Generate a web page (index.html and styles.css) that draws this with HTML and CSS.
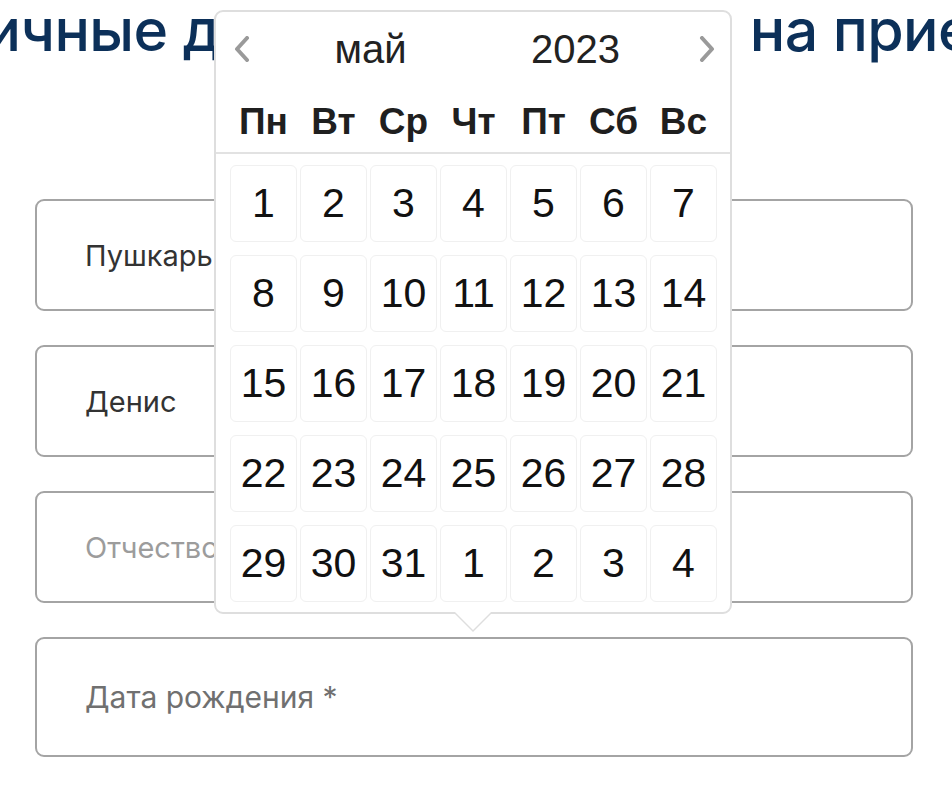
FILE: index.html
```html
<!DOCTYPE html>
<html lang="ru">

<head>
  <meta charset="UTF-8">
  <meta name="viewport" content="width=device-width, initial-scale=1.0">
  <title>Запись на приём</title>
  <link rel="stylesheet" href="styles.css">
</head>

<body>

  <div class="page">
    <h1 class="page__title">Личные данные для записи на прием</h1>

    <form class="form">
      <div class="field">
        <input class="field__input" type="text" value="Пушкарь">
      </div>

      <div class="field">
        <input class="field__input" type="text" value="Денис">
      </div>

      <div class="field">
        <input class="field__input" type="text" placeholder="Отчество">
      </div>

      <div class="field field_date">
        <input class="field__input field__input_date" type="text" placeholder="Дата рождения *">

        <div class="datepicker">
          <div class="datepicker__head">
            <button class="datepicker__nav" type="button" aria-label="Предыдущий месяц">
              <svg width="16" height="26" viewBox="0 0 16 26"><path d="M13 2 L3 13 L13 24" fill="none" stroke="#9a9a9a" stroke-width="4" stroke-linecap="round" stroke-linejoin="round"/></svg>
            </button>
            <span class="datepicker__title">май</span>
            <span class="datepicker__title">2023</span>
            <button class="datepicker__nav datepicker__nav_next" type="button" aria-label="Следующий месяц">
              <svg width="16" height="26" viewBox="0 0 16 26"><path d="M3 2 L13 13 L3 24" fill="none" stroke="#9a9a9a" stroke-width="4" stroke-linecap="round" stroke-linejoin="round"/></svg>
            </button>
          </div>

          <div class="datepicker__weekdays">
            <span>Пн</span><span>Вт</span><span>Ср</span><span>Чт</span><span>Пт</span><span>Сб</span><span>Вс</span>
          </div>

          <div class="datepicker__days">
            <button class="day" type="button">1</button>
            <button class="day" type="button">2</button>
            <button class="day" type="button">3</button>
            <button class="day" type="button">4</button>
            <button class="day" type="button">5</button>
            <button class="day" type="button">6</button>
            <button class="day" type="button">7</button>
            <button class="day" type="button">8</button>
            <button class="day" type="button">9</button>
            <button class="day" type="button">10</button>
            <button class="day" type="button">11</button>
            <button class="day" type="button">12</button>
            <button class="day" type="button">13</button>
            <button class="day" type="button">14</button>
            <button class="day" type="button">15</button>
            <button class="day" type="button">16</button>
            <button class="day" type="button">17</button>
            <button class="day" type="button">18</button>
            <button class="day" type="button">19</button>
            <button class="day" type="button">20</button>
            <button class="day" type="button">21</button>
            <button class="day" type="button">22</button>
            <button class="day" type="button">23</button>
            <button class="day" type="button">24</button>
            <button class="day" type="button">25</button>
            <button class="day" type="button">26</button>
            <button class="day" type="button">27</button>
            <button class="day" type="button">28</button>
            <button class="day" type="button">29</button>
            <button class="day" type="button">30</button>
            <button class="day" type="button">31</button>
            <button class="day day_next-month" type="button">1</button>
            <button class="day day_next-month" type="button">2</button>
            <button class="day day_next-month" type="button">3</button>
            <button class="day day_next-month" type="button">4</button>
          </div>
        </div>
      </div>
    </form>
  </div>

</body>

</html>
```

FILE: styles.css
```css
body {
  margin: 0;
  background-color: #fff;
  font-family: Inter, "Noto Sans", sans-serif;
}

.page {
  overflow: hidden;
  min-height: 786px;
}

.page__title {
  margin: 0 0 0 -58px;
  font-size: 59px;
  line-height: 60px;
  font-weight: 500;
  letter-spacing: -0.6px;
  color: #0c3059;
  white-space: nowrap;
}

.form {
  display: flex;
  flex-direction: column;
  gap: 34px;
  width: 878px;
  margin: 139px 0 0 35px;
}

.field {
  position: relative;
}

.field__input {
  display: block;
  box-sizing: border-box;
  width: 100%;
  height: 112px;
  padding: 0 20px 0 48px;
  border: 2px solid #a4a4a4;
  border-radius: 9px;
  font-family: inherit;
  font-size: 29px;
  color: #333;
  background: #fff;
  outline: none;
}

.field__input::placeholder {
  color: #9c9c9c;
}

.field__input_date {
  height: 120px;
  font-size: 30px;
}

.field__input_date::placeholder {
  color: #707070;
}

/* календарь над полем даты */
.datepicker {
  position: absolute;
  left: 179px;
  bottom: calc(100% + 23px);
  z-index: 2;
  box-sizing: border-box;
  width: 518px;
  padding: 0 13px 10px 14px;
  border: 2px solid #dedede;
  border-radius: 9px;
  background-color: #fff;
  font-family: "Liberation Sans", Arial, sans-serif;
  color: #222;
}

.datepicker::before,
.datepicker::after {
  content: "";
  position: absolute;
  left: 50%;
  width: 0;
  height: 0;
  border-style: solid;
  border-color: transparent;
}

.datepicker::before {
  top: calc(100% + 2px);
  margin-left: -18px;
  border-width: 18px 18px 0;
  border-top-color: #dedede;
}

.datepicker::after {
  top: 100%;
  margin-left: -18px;
  border-width: 18px 18px 0;
  border-top-color: #fff;
}

.datepicker__head {
  display: flex;
  align-items: center;
  height: 74px;
  margin: 0 -13px 0 -14px;
}

.datepicker__nav {
  display: flex;
  align-items: center;
  justify-content: center;
  width: 52px;
  height: 100%;
  padding: 0;
  border: 0;
  background: none;
  cursor: pointer;
}

.datepicker__nav_next {
  padding-left: 6px;
}

.datepicker__title {
  flex: 1;
  text-align: center;
  font-size: 40px;
  line-height: 74px;
}

.datepicker__weekdays {
  display: grid;
  grid-template-columns: repeat(7, 1fr);
  gap: 3px;
  height: 66px;
  box-sizing: border-box;
  padding-top: 6px;
  font-size: 37px;
  line-height: 60px;
  font-weight: bold;
  text-align: center;
  color: #1f1f1f;
}

.datepicker__days {
  display: grid;
  grid-template-columns: repeat(7, 1fr);
  column-gap: 3px;
  row-gap: 13px;
  margin: 0 -13px 0 -14px;
  padding: 11px 13px 0 14px;
  border-top: 2px solid #e2e2e2;
}

.day {
  height: 77px;
  padding: 0;
  border: 1px solid #f0f0f0;
  border-radius: 6px;
  background-color: #fff;
  font-family: inherit;
  font-size: 41px;
  color: #111;
  cursor: pointer;
}
```
